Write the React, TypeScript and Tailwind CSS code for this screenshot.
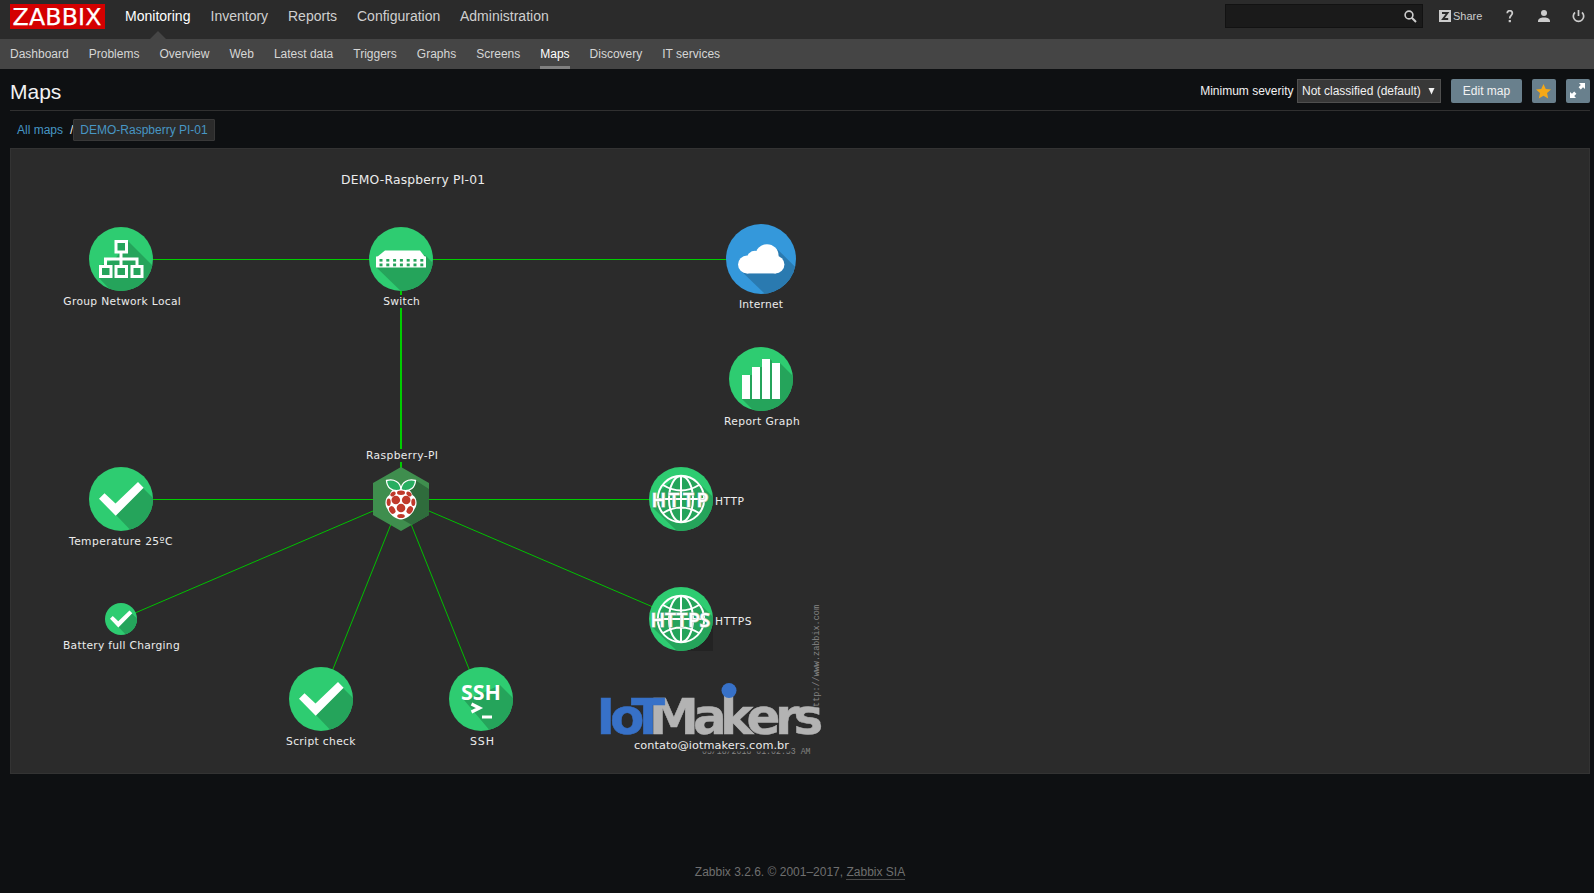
import React from "react";

const topNav = [
  { t: "Monitoring", w: 65.5, active: true },
  { t: "Inventory", w: 57.5 },
  { t: "Reports", w: 49 },
  { t: "Configuration", w: 83 },
  { t: "Administration", w: 89 },
];

const subNav = ["Dashboard", "Problems", "Overview", "Web", "Latest data", "Triggers", "Graphs", "Screens", "Maps", "Discovery", "IT services"];

const SANS = "'DejaVu Sans', sans-serif";
const LIGHT = "#2ecc71";
const DARK = "#25a45b";

function Label({ x, y, w, children, size = 10.7 }: { x: number; y: number; w: number; children: string; size?: number }) {
  return (
    <text x={x} y={y} textLength={w} fontSize={size} fill="#ececec" fontFamily={SANS}>
      {children}
    </text>
  );
}

function Disc({ cx, cy, r = 32, shadow, id, light = LIGHT, dark = DARK, children }: { cx: number; cy: number; r?: number; shadow: string; id: string; light?: string; dark?: string; children: React.ReactNode }) {
  return (
    <g transform={`translate(${cx} ${cy}) scale(${r / 32})`}>
      <clipPath id={id}>
        <circle r="32" />
      </clipPath>
      <circle r="32" fill={light} />
      <path d={shadow} fill={dark} clipPath={`url(#${id})`} />
      {children}
    </g>
  );
}

function Check({ cx, cy, r, id }: { cx: number; cy: number; r?: number; id: string }) {
  return (
    <Disc cx={cx} cy={cy} r={r} id={id} shadow="M22-11L40 7V40H18L-5 16Z">
      <path d="M-22-.3L-16.500-5.800L-5.500 4.500L17-17L22.600-11.300L-5.300 16.800Z" fill="#fff" />
    </Disc>
  );
}

function Globe({ cx, cy, id, text, xs }: { cx: number; cy: number; id: string; text: string; xs: string }) {
  return (
    <Disc cx={cx} cy={cy} id={id} shadow="M17-17L40 6V40H12L-4 32L-28 9L-22-8L0-24Z">
      <g fill="none" stroke="#fff" strokeWidth="2">
        <circle r="23.200" />
        <ellipse rx="12" ry="23" />
        <path d="M0-23V23M-23 0H23M-18-14Q0-3 18-14M-18 14Q0 3 18 14" />
      </g>
      <text x={xs} y="8" fontSize="19.500" fontWeight="600" fontFamily="'Open Sans', sans-serif" fill="#fff" stroke="#c0cac4" strokeWidth="1.200" paintOrder="stroke">
        {text}
      </text>
    </Disc>
  );
}

function NetworkMap() {
  return (
    <svg width="1578" height="624" viewBox="11 149 1578 624" className="block">
      <g stroke="#00cc00" fill="none">
        <path d="M121 259.500H761M121 499.500H681" />
        <path d="M401 259V499" strokeWidth="2" />
        <path d="M401 499L121 619M401 499L681 619M401 499L321 699M401 499L481 699" stroke="#00c000" />
      </g>
      <rect x="382" y="295" width="40" height="13" fill="#2b2b2b" />
      <rect x="365" y="449" width="75" height="13" fill="#2b2b2b" />

      <text x="341" y="184" textLength="144" fontSize="12.300" fill="#ececec" fontFamily={SANS}>DEMO-Raspberry PI-01</text>

      <Disc cx={121} cy={259} id="grp" shadow="M7-18L40 15V40H-2L-22 19V7L-6 0Z">
        <g fill={DARK} stroke="#fff" strokeWidth="3">
          <path d="M0-8V8M-15.500 8V0H16V8" fill="none" />
          <rect x="-5" y="-17.500" width="10.500" height="10.500" />
          <rect x="-20.500" y="7.500" width="10.500" height="10" />
          <rect x="-5" y="7.500" width="10.500" height="10" />
          <rect x="11" y="7.500" width="10" height="10" />
        </g>
      </Disc>
      <Disc cx={401} cy={259} id="sw" shadow="M24-4L40 12V40H8L-25 8Z">
        <path d="M-16-8.500H19L24-2H-24Z" fill="#fff" />
        <rect x="-25" y="-2.500" width="50" height="11" fill="#fff" />
        {[0, 1, 2, 3, 4, 5, 6].map((i) => (
          <g key={i} fill={DARK}>
            <rect x={-21.5 + i * 6.8} y="0" width="3" height="2.600" />
            <rect x={-21.5 + i * 6.8} y="4.500" width="3" height="2.800" />
          </g>
        ))}
      </Disc>
      <Disc cx={761} cy={259} r={35} id="net" light="#3498db" dark="#2a7ab0" shadow="M15-9L40 16V40H12L-17 12Z">
        <g fill="#fff">
          <circle cx="-12.800" cy="5" r="8.200" />
          <circle cx="13.200" cy="5" r="8.200" />
          <circle cx="-5.500" cy="0" r="7.500" />
          <circle cx="5.500" cy="-3" r="10.600" />
          <rect x="-13" y="2" width="26.500" height="11.200" />
        </g>
      </Disc>
      <Disc cx={761} cy={379} id="graph" shadow="M19-16L40 5V40H1L-19 20H-11V-4H-9V-2H-1V-12H1V-10H9V-20L11-18V-14Z">
        <path d="M-19-4H-11V20H-19ZM-9-12H-1V20H-9ZM1-20H9V20H1ZM11-16H19V20H11Z" fill="#fff" />
      </Disc>
      <Check cx={121} cy={499} id="c1" />
      <Check cx={121} cy={619} r={16} id="c2" />
      <Check cx={321} cy={699} id="c3" />

      <g transform="translate(401 499)">
        <path d="M0-32L28-16V16L0 32L-28-16V-16Z" fill="none" />
        <path d="M0-32L28-16V16L0 32L-28 16V-16Z" fill="#3f8e4e" />
        <path d="M14-19L28-10V16L11 26L-10 14L10-12Z" fill="#2f6c3c" />
        <path d="M0-11C5-12 10-9 11.500-4C16.500-1 16.500 6 13.500 10C12 15 5 20.500 0 20.500C-5 20.500-12 15-13.500 10C-16.500 6-16.500-1-11.500-4C-10-9-5-12 0-11Z" fill="#fff" />
        <g stroke="#fff" strokeWidth="1.300" fill="#27ae60">
          <path d="M0-9.500C-.5-17-7-20.500-14.500-18.500C-14-11-9-8-3-8.500Z" />
          <path d="M0-9.500C.5-17 7-20.500 14.500-18.500C14-11 9-8 3-8.500Z" />
        </g>
        <g fill="#c0392b">
          <ellipse cx="0" cy="-6.300" rx="4" ry="2.200" />
          <ellipse cx="-8" cy="-5" rx="3" ry="2" transform="rotate(-35 -8 -5)" />
          <ellipse cx="8" cy="-5" rx="3" ry="2" transform="rotate(35 8 -5)" />
          <circle cx="-5.200" cy="1" r="4.300" />
          <circle cx="5.200" cy="1" r="4.300" />
          <ellipse cx="-12.300" cy="3.300" rx="2" ry="3.700" />
          <ellipse cx="12.300" cy="3.300" rx="2" ry="3.700" />
          <circle cx="0" cy="9" r="4.300" />
          <ellipse cx="-8.800" cy="11" rx="2.900" ry="4" transform="rotate(-28 -8.800 11)" />
          <ellipse cx="8.800" cy="11" rx="2.900" ry="4" transform="rotate(28 8.800 11)" />
          <ellipse cx="0" cy="17" rx="3.800" ry="2" />
        </g>
      </g>

      <Globe cx={681} cy={499} id="http" text="HTTP" xs="-29.5 -12.500 2 15.500" />
      <rect x="681" y="619" width="32" height="32" fill="#232323" />
      <Globe cx={681} cy={619} id="https" text="HTTPS" xs="-30.500 -16 -4.500 7 18.500" />

      <Disc cx={481} cy={699} id="ssh" shadow="M19-14L40 7V40H16L-17 1L-5-3Z">
        <text x="-20" y="1" textLength="40" lengthAdjust="spacingAndGlyphs" fontSize="20.500" fontWeight="700" fontFamily="'Open Sans', sans-serif" fill="#fff">SSH</text>
        <path d="M-9.500 5L-1.500 9L-9.500 13" stroke="#fff" strokeWidth="3.200" fill="none" />
        <rect x="1" y="16.500" width="10" height="3" fill="#fff" />
      </Disc>

      <Label x={63.3} y={305} w={117.5}>Group Network Local</Label>
      <Label x={383.3} y={305} w={36.5}>Switch</Label>
      <Label x={739} y={308} w={44}>Internet</Label>
      <Label x={724} y={425} w={75.7}>Report Graph</Label>
      <Label x={366} y={459} w={72}>Raspberry-PI</Label>
      <Label x={69} y={545} w={103.5}>Temperature 25ºC</Label>
      <Label x={63} y={649} w={116.7}>Battery full Charging</Label>
      <Label x={286} y={745} w={69.5}>Script check</Label>
      <Label x={470} y={745} w={24} size={11}>SSH</Label>
      <Label x={715} y={505} w={29}>HTTP</Label>
      <Label x={715} y={625} w={36.5}>HTTPS</Label>

      <text transform="translate(818.500 712) rotate(-90)" textLength="107" lengthAdjust="spacingAndGlyphs" fontSize="8.500" fill="#858585" fontFamily="'Liberation Mono', monospace">http://www.zabbix.com</text>
      <text x="702" y="754" textLength="108.500" lengthAdjust="spacingAndGlyphs" fontSize="8.500" fill="#858585" fontFamily="'Liberation Mono', monospace">05/18/2018 01:02:53 AM</text>
      <rect x="632" y="738" width="158" height="13.500" fill="#2b2b2b" />

      <g fontFamily={SANS} fontWeight="700" fontSize="50">
        <text x="649 693 720 746.5 775 793.5" y="734" fill="#b3b3b3" stroke="#b3b3b3" strokeWidth=".5">Makers</text>
        <text x="596.5 610 631" y="734" fill="#3771c8" stroke="#3771c8" strokeWidth=".5">IoT</text>
      </g>
      <circle cx="729" cy="690.500" r="7.500" fill="#3771c8" />
      <Label x={634} y={749} w={155} size={11.3}>contato@iotmakers.com.br</Label>
    </svg>
  );
}

export default function App() {
  return (
    <div className="flex h-[893px] w-[1594px] flex-col overflow-hidden bg-[#0e1012] font-['Liberation_Sans',Arial,sans-serif] text-xs text-[#f2f2f2]">
      <header className="flex h-[39px] shrink-0 items-start bg-[#2b2b2b] pl-[10px]">
        <div className="mt-1 h-[25px] w-[95px] bg-[#d40000]">
          <svg width="95" height="25" viewBox="0 0 95 25" className="block overflow-visible">
            <text x="2.500" y="21" textLength="89" fontSize="23.700" fill="#fff" stroke="#fff" strokeWidth=".25" fontFamily={SANS}>ZABBIX</text>
          </svg>
        </div>
        <nav className="ml-5 flex h-full gap-5 text-sm leading-[32px]">
          {topNav.map((n) => (
            <div key={n.t} className={n.active ? "flex h-full flex-col items-center justify-between text-white" : "text-[#d0d0d0]"} style={{ width: n.w }}>
              <span className="h-[31px] whitespace-nowrap">{n.t}</span>
              {n.active && (
                <svg width="16" height="8" className="shrink-0">
                  <path d="M0 8L8 0L16 8Z" fill="#454545" />
                </svg>
              )}
            </div>
          ))}
        </nav>
        <div className="ml-auto flex pr-[14px] text-[#cccccc]">
          <div className="mt-1 flex h-6 w-[198px] items-center justify-end border border-[#121212] bg-[#1a1a1a] pr-[5px]">
            <svg width="13" height="13" viewBox="0 0 13 13" fill="none" stroke="#ccc">
              <circle cx="5" cy="5" r="3.900" strokeWidth="1.600" />
              <path d="M7.800 7.800L12 12" strokeWidth="2" />
            </svg>
          </div>
          <div className="ml-4 flex h-8 items-center text-[11px]">
            <svg width="12" height="12" className="mr-[2px]">
              <rect width="12" height="12" fill="#ccc" />
              <path d="M3 3H8.500L4 9H9.200" fill="none" stroke="#2b2b2b" strokeWidth="1.900" />
            </svg>
            <span className="w-[29px]">Share</span>
          </div>
          <svg width="8" height="13" viewBox="0 0 8 13" className="mt-[10px] ml-[24px]">
            <path d="M1.200 3.200C1.400-.2 6.500 0 6.300 3.200C6.200 5.300 3.800 5.400 3.700 8.500" fill="none" stroke="#ccc" strokeWidth="1.800" />
            <rect x="2.700" y="10" width="2.200" height="2.200" fill="#ccc" />
          </svg>
          <svg width="12" height="12" viewBox="0 0 12 12" fill="#ccc" className="mt-[10px] ml-[24px]">
            <circle cx="6" cy="3" r="3" />
            <path d="M0 12V10.500C1 7.800 4 7.500 6 7.500S11 7.800 12 10.500V12Z" />
          </svg>
          <svg width="13" height="13" viewBox="0 0 13 13" fill="none" stroke="#ccc" strokeWidth="1.700" className="mt-[10px] ml-[22px] -mr-[5px]">
            <path d="M6.500 0V6M3 2.300A5.200 5.200 0 1 0 10 2.300" />
          </svg>
        </div>
      </header>

      <nav className="flex h-[30px] shrink-0 gap-5 bg-[#454545] pl-[10px] leading-[30px] text-[#d6d6d6]">
        {subNav.map((t) => (
          <div key={t} className={t === "Maps" ? "h-full border-b-[3px] border-[#808080] text-white" : ""}>{t}</div>
        ))}
      </nav>

      <main className="flex flex-col pr-1 pl-[10px]">
        <div className="flex h-[42px] items-start border-b border-[#303030]">
          <h1 className="h-[42px] text-[21px] leading-[46px]">Maps</h1>
          <div className="mt-[10px] ml-auto flex h-6 items-center">
            <span className="mr-[3.5px]">Minimum severity</span>
            <div className="flex h-6 w-36 items-center justify-between border border-[#4f4f4f] bg-[#383838] pr-[5px] pl-1">
              <span>Not classified (default)</span>
              <svg width="7" height="7">
                <path d="M.5 0H6.500L3.500 6.500Z" fill="#f2f2f2" />
              </svg>
            </div>
            <button className="ml-[10px] h-6 w-[71px] rounded-[2px] bg-[#69808d]">Edit map</button>
            <button className="ml-[10px] flex size-6 items-center justify-center rounded-[2px] bg-[#69808d] pr-px">
              <svg width="15" height="15" viewBox="0 0 14 14">
                <path d="M7 0L9.100 4.700L14 5.200L10.300 8.500L11.400 13.600L7 11L2.600 13.600L3.700 8.500L0 5.200L4.900 4.700Z" fill="#f5a817" />
              </svg>
            </button>
            <button className="ml-[10px] flex size-6 items-center justify-center rounded-[2px] bg-[#69808d] pr-px pb-px">
              <svg width="15" height="15" viewBox="0 0 15 15" fill="#fff">
                <path d="M9 0H15V6L13 4.200L10.800 6.400L8.600 4.200L10.800 2Z" />
                <path d="M6 15H0V9L2 10.800L4.200 8.600L6.400 10.800L4.200 13Z" />
              </svg>
            </button>
          </div>
        </div>
        <div className="mt-2 flex h-[22px] items-center text-[#4796c4]">
          <span className="ml-[7px]">All maps</span>
          <span className="ml-[7px] w-[3px] text-[#f2f2f2]">/</span>
          <span className="flex h-[22px] w-[142px] items-center justify-center rounded-[1px] border border-[#383838] bg-[#2b2b2b] whitespace-nowrap">DEMO-Raspberry PI-01</span>
        </div>
        <section className="mt-[7px] border border-[#333333] bg-[#2b2b2b]">
          <NetworkMap />
        </section>
      </main>

      <footer className="mt-auto flex h-[28px] items-start justify-center pl-[6px] text-[#6f6f6f]">
        <span className="leading-[15px]">Zabbix 3.2.6. © 2001–2017,&nbsp;</span>
        <span className="h-[15px] border-b border-[#4a4a4a] leading-[15px]">Zabbix SIA</span>
      </footer>
    </div>
  );
}
